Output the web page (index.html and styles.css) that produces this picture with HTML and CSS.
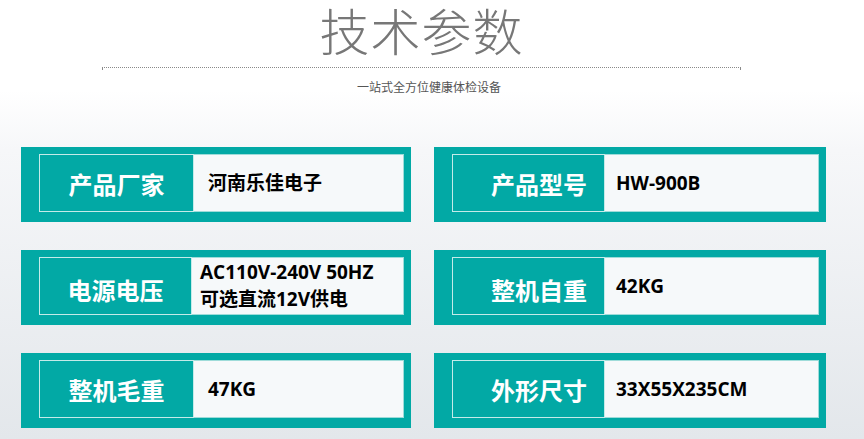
FILE: index.html
```html
<!DOCTYPE html>
<html lang="zh-CN">
<head>
    <meta charset="UTF-8">
    <meta name="viewport" content="width=device-width, initial-scale=1.0">
    <title>技术参数</title>
    <link rel="stylesheet" href="styles.css">
</head>
<body>
    <div class="page">
        <div class="heading">
            <h1 class="title">技术参数</h1>
            <div class="rule"></div>
            <p class="subtitle">一站式全方位健康体检设备</p>
        </div>

        <div class="params">
            <div class="card">
                <div class="inner">
                    <div class="label">产品厂家</div>
                    <div class="value">河南乐佳电子</div>
                </div>
            </div>
            <div class="card right">
                <div class="inner">
                    <div class="label">产品型号</div>
                    <div class="value">HW-900B</div>
                </div>
            </div>

            <div class="card">
                <div class="inner">
                    <div class="label low">电源电压</div>
                    <div class="value tight">AC110V-240V 50HZ<br>可选直流12V供电</div>
                </div>
            </div>
            <div class="card right">
                <div class="inner">
                    <div class="label low">整机自重</div>
                    <div class="value">42KG</div>
                </div>
            </div>

            <div class="card">
                <div class="inner">
                    <div class="label">整机毛重</div>
                    <div class="value">47KG</div>
                </div>
            </div>
            <div class="card right">
                <div class="inner">
                    <div class="label">外形尺寸</div>
                    <div class="value">33X55X235CM</div>
                </div>
            </div>
        </div>
    </div>
</body>
</html>
```

FILE: styles.css
```css
body {
    font-family: 'Open Sans', 'Noto Sans CJK SC', sans-serif;
    margin: 0;
    padding: 0;
    height: 439px;
    overflow: hidden;
    background: linear-gradient(to bottom, #ffffff 0, #ffffff 90px, #f6f7f9 150px, #e3e7eb 100%);
}

.page {
    width: 805px;
    margin-left: 21px;
}

.heading {
    width: 639px;
    margin-left: 81px;
    text-align: center;
}

.title {
    margin: 0;
    padding-top: 1px;
    font-family: 'Noto Sans CJK SC', sans-serif;
    font-size: 50px;
    font-weight: 300;
    line-height: 56px;
    color: #777;
    letter-spacing: 1px;
}

.rule {
    height: 2px;
    margin-top: 10px;
    border-top: 1px dotted #8a8a8a;
    border-left: 1px solid #8a8a8a;
    border-right: 1px solid #8a8a8a;
}

.subtitle {
    margin: 9px 0 0;
    padding-left: 15px;
    font-family: 'Noto Sans CJK SC', sans-serif;
    font-size: 12px;
    line-height: 16px;
    color: #555;
}

.params {
    display: grid;
    grid-template-columns: 390px 392px;
    column-gap: 23px;
    row-gap: 28px;
    margin-top: 52px;
}

.card {
    height: 75px;
    box-sizing: border-box;
    padding: 7px 7px 10px 18px;
    background: #02a9a5;
}

.inner {
    display: flex;
    height: 100%;
    box-sizing: border-box;
    border: 1px solid #9edcd9;
    background: #f6f9fa;
}

.label {
    width: 153px;
    flex-shrink: 0;
    display: flex;
    align-items: center;
    justify-content: center;
    margin: -1px 0 -1px -1px;
    border: 1px solid #c4ebe9;
    background: #02a9a5;
    color: #fff;
    font-family: 'Noto Sans CJK SC', sans-serif;
    font-size: 24px;
    font-weight: bold;
}

.label.low {
    padding-top: 6px;
    box-sizing: border-box;
}

.right .label {
    justify-content: flex-end;
    padding-right: 17px;
    box-sizing: border-box;
}

.value {
    display: flex;
    flex-direction: column;
    justify-content: center;
    padding-left: 14px;
    font-size: 19px;
    font-weight: bold;
    line-height: 27px;
    color: #000;
}

.value.tight {
    display: block;
    align-self: center;
    padding-left: 8px;
}

.right .value {
    padding-left: 11px;
}
```
